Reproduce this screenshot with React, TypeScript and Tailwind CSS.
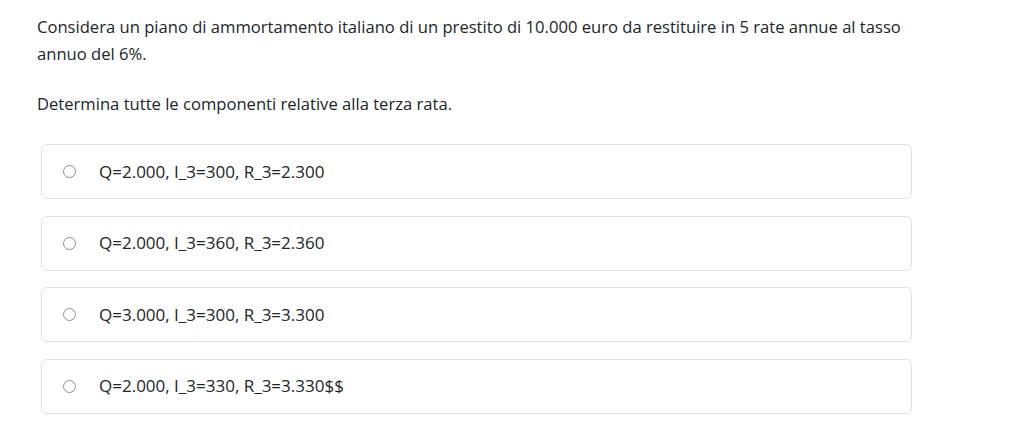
import React from "react";

const options = [
  "Q=2.000, I_3=300, R_3=2.300",
  "Q=2.000, I_3=360, R_3=2.360",
  "Q=3.000, I_3=300, R_3=3.300",
  "Q=2.000, I_3=330, R_3=3.330$$",
];

export default function App() {
  return (
    <div
      className="w-[1024px] h-[421px] bg-white text-[#212529] overflow-hidden"
      style={{ fontFamily: '"Open Sans", "Noto Sans", sans-serif' }}
    >
      <div className="pl-[37px] pt-[13px] w-[930px]">
        <p className="text-[16.6px] leading-[27px]">
          Considera un piano di ammortamento italiano di un prestito di 10.000 euro da restituire in 5 rate annue al tasso
          <br />
          annuo del 6%.
        </p>
        <p className="text-[16.6px] leading-[27px] mt-[23px]">
          Determina tutte le componenti relative alla terza rata.
        </p>
        <div className="mt-[27px] ml-[4px] w-[871px] flex flex-col gap-[16.5px]">
          {options.map((o) => (
            <label
              key={o}
              className="h-[55px] flex items-center border border-[#dee2e6] rounded-[6px] pl-[21px]"
            >
              <span className="w-[13px] h-[13px] rounded-full border border-[#8f8f8f] bg-white shrink-0" />
              <span className="ml-[23px] text-[17px] leading-[24px]">{o}</span>
            </label>
          ))}
        </div>
      </div>
    </div>
  );
}
